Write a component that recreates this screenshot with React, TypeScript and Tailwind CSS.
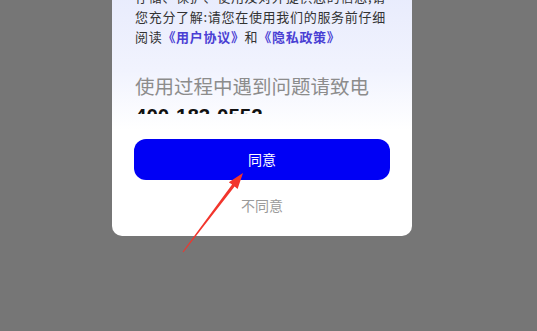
const CJK = "font-['Noto_Sans_CJK_SC','Noto_Sans',sans-serif]";

function AgreementText() {
  return (
    <div className="whitespace-nowrap text-[13px] leading-[20px] tracking-[0.7px] text-[#333333]">
      <span className="block">我们依据相关法律法规收集、使用、</span>
      <span className="block">存储、保护、使用及对外提供您的信息,请</span>
      <span className="block">您充分了解:请您在使用我们的服务前仔细</span>
      <span className="block">
        阅读
        <a className="font-bold text-[#4a3fd4]">《用户协议》</a>和
        <a className="font-bold text-[#4a3fd4]">《隐私政策》</a>
      </span>
    </div>
  );
}

function PointerArrow() {
  return (
    <svg className="pointer-events-none absolute inset-0" width="537" height="331" viewBox="0 0 537 331">
      <polygon
        points="182.6,251.7 232.1,184.6 228.8,182.3 243,173 237.6,189 234.6,186.6 183.4,252.3"
        fill="#f2352c"
      />
    </svg>
  );
}

export default function App() {
  return (
    <div className={`relative h-[331px] w-[537px] overflow-hidden bg-[#767676] pl-[112px] ${CJK}`}>
      <div className="-mt-[40px] flex w-[300px] flex-col rounded-[10px] bg-[linear-gradient(180deg,#e4e8fc_0px,#f1f3fe_110px,#ffffff_170px)] px-[22px] pb-[21px]">
        <div className="h-[154px] overflow-hidden pl-[1px] pt-[7px]">
          <AgreementText />
          <p className="mt-[25px] whitespace-nowrap text-[19.5px] leading-[28px] text-[#8c8c8c]">使用过程中遇到问题请致电</p>
          <p className="mt-[4px] font-['Liberation_Sans',sans-serif] text-[20.5px] font-bold leading-[24px] text-[#111111]">400-183-0552</p>
        </div>
        <button className="mt-[25px] flex h-[41px] w-full items-center justify-center rounded-[12px] bg-[#0000f5] text-[14px] text-white">
          同意
        </button>
        <button className="mt-[15px] text-[14px] leading-[20px] text-[#9a9a9a]">不同意</button>
      </div>
      <PointerArrow />
    </div>
  );
}
